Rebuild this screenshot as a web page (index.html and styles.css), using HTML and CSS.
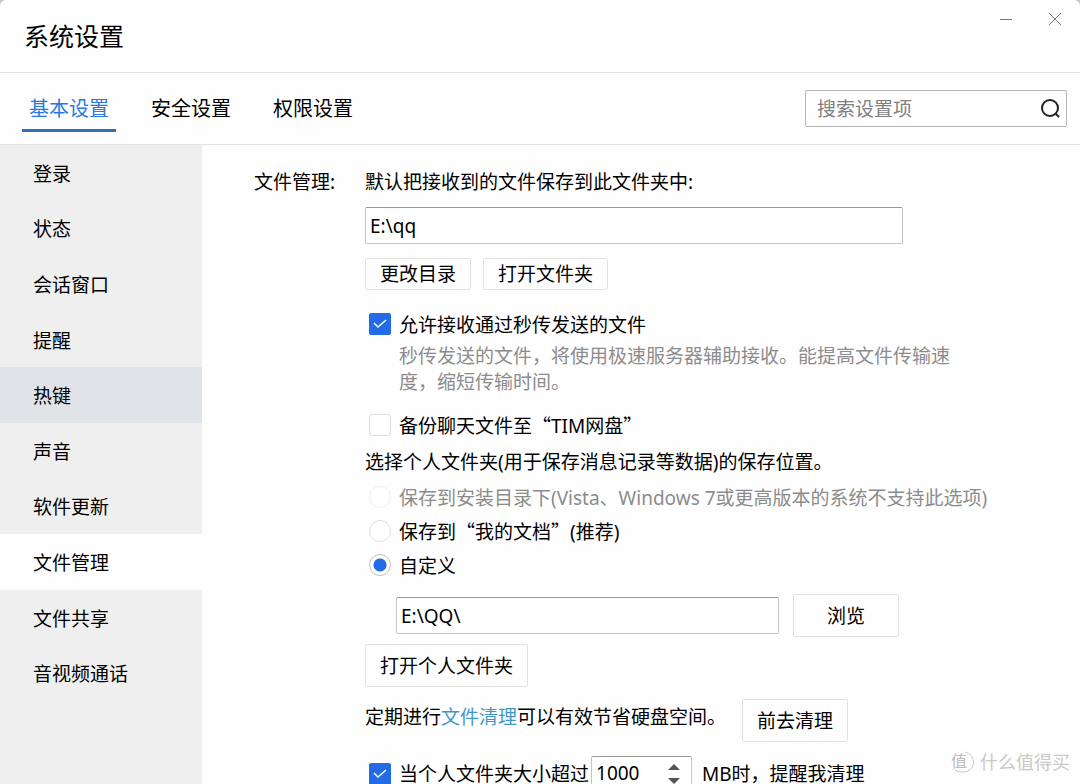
FILE: index.html
```
<!DOCTYPE html>
<html lang="zh-CN">
<head>
    <meta charset="UTF-8">
    <meta name="viewport" content="width=device-width, initial-scale=1.0">
    <title>系统设置</title>
    <link rel="stylesheet" href="styles.css">
</head>
<body>

<div class="window">
    <header class="titlebar">
        <h1>系统设置</h1>
        <div class="win-buttons">
            <button type="button" aria-label="最小化">
                <svg width="14" height="14" viewBox="0 0 14 14"><path d="M1 7.5h12"/></svg>
            </button>
            <button type="button" aria-label="关闭">
                <svg width="14" height="14" viewBox="0 0 14 14"><path d="M1 1l12 12M13 1L1 13"/></svg>
            </button>
        </div>
    </header>

    <div class="toolbar">
        <nav class="tabs">
            <a href="#" class="active">基本设置</a>
            <a href="#">安全设置</a>
            <a href="#">权限设置</a>
        </nav>
        <div class="search">
            <input type="text" placeholder="搜索设置项" aria-label="搜索设置项">
            <button type="button" aria-label="搜索">
                <svg width="20" height="20" viewBox="0 0 20 20"><circle cx="10" cy="9" r="8"/><path d="M15 14l4 4"/></svg>
            </button>
        </div>
    </div>

    <div class="main">
        <nav class="sidebar">
            <div class="menu">
                <a href="#">登录</a>
                <a href="#">状态</a>
                <a href="#">会话窗口</a>
                <a href="#">提醒</a>
                <a href="#" class="hover">热键</a>
                <a href="#">声音</a>
                <a href="#">软件更新</a>
                <a href="#" class="active">文件管理</a>
                <a href="#">文件共享</a>
                <a href="#">音视频通话</a>
            </div>
        </nav>

        <form class="content">
            <h2>文件管理:</h2>
            <div class="fields">
                <label class="line first" for="recv">默认把接收到的文件保存到此文件夹中:</label>
                <input class="box path" type="text" id="recv" value="E:\qq">
                <div class="buttons">
                    <button type="button" class="btn small">更改目录</button>
                    <button type="button" class="btn small">打开文件夹</button>
                </div>

                <label class="option fast"><input type="checkbox" checked>允许接收通过秒传发送的文件</label>
                <p class="hint">秒传发送的文件，将使用极速服务器辅助接收。能提高文件传输速度，缩短传输时间。</p>
                <label class="option backup"><input type="checkbox"><span>备份聊天文件至<span class="quote">“</span>TIM网盘<span class="quote">”</span></span></label>

                <p class="line place">选择个人文件夹(用于保存消息记录等数据)的保存位置。</p>
                <div class="radios">
                    <label class="option disabled"><input type="radio" name="place" disabled>保存到安装目录下(Vista、Windows 7或更高版本的系统不支持此选项)</label>
                    <label class="option"><input type="radio" name="place"><span>保存到<span class="quote">“</span>我的文档<span class="quote">”</span>(推荐)</span></label>
                    <label class="option"><input type="radio" name="place" checked>自定义</label>
                </div>
                <div class="custom">
                    <input class="box" type="text" value="E:\QQ\" aria-label="自定义目录">
                    <button type="button" class="btn">浏览</button>
                </div>
                <button type="button" class="btn">打开个人文件夹</button>

                <div class="clean">
                    <span>定期进行<a href="#">文件清理</a>可以有效节省硬盘空间。</span>
                    <button type="button" class="btn">前去清理</button>
                </div>
                <div class="limit">
                    <label class="option"><input type="checkbox" checked>当个人文件夹大小超过</label>
                    <div class="spin">
                        <input class="box" type="number" value="1000" aria-label="大小">
                        <svg width="12" height="22" viewBox="0 0 12 22"><path d="M0 7l6-6 6 6zM0 15l6 6 6-6z"/></svg>
                    </div>
                    <span>MB时，提醒我清理</span>
                </div>
            </div>
        </form>
    </div>

    <div class="watermark">
        <svg width="24" height="24" viewBox="0 0 24 24">
            <path d="M15 2A10 10 0 0 1 12 22Q8 22 5 20"/>
            <text x="1" y="17">值</text>
        </svg>
        <span>什么值得买</span>
    </div>
</div>

</body>
</html>
```
FILE: styles.css
```
* {
    box-sizing: border-box;
}
body {
    margin: 0;
    background-color: #c8c8c8;
    color: #000;
    font-family: "Noto Sans", "Noto Sans CJK SC", sans-serif;
    font-size: 19px;
}
h1, h2, p {
    margin: 0;
    font-weight: normal;
}
a {
    color: inherit;
    text-decoration: none;
}
button, input {
    font: inherit;
    color: inherit;
}
button {
    padding: 0;
    border: none;
    background: none;
    cursor: pointer;
}
.window {
    position: relative;
    display: flex;
    flex-direction: column;
    height: 100vh;
    overflow: hidden;
    background-color: #fefefe;
    border-radius: 6px 6px 0 0;
}

/* title bar */
.titlebar {
    display: flex;
    justify-content: space-between;
    flex: none;
    height: 73px;
    padding: 0 18px 0 24px;
    border-bottom: 1px solid #e4e4e4;
}
h1 {
    font-size: 25px;
    line-height: 72px;
}
.win-buttons {
    display: flex;
    gap: 35px;
    padding-top: 12px;
}
.win-buttons button {
    width: 14px;
    height: 14px;
}
svg {
    display: block;
    fill: none;
    stroke: #777;
}

/* tabs and search */
.toolbar {
    display: flex;
    justify-content: space-between;
    align-items: center;
    flex: none;
    height: 72px;
    padding: 0 13px 0 22px;
    border-bottom: 1px solid #e4e4e4;
}
.tabs {
    display: flex;
    gap: 28px;
    font-size: 20px;
}
.tabs a {
    height: 46px;
    padding: 0 7px;
    line-height: 46px;
    border-bottom: 3px solid transparent;
}
.tabs .active {
    color: #2b78e4;
    border-color: #2f6fb5;
}
.search {
    display: flex;
    align-items: center;
    width: 262px;
    height: 37px;
    padding: 0 6px 0 11px;
    border: 1px solid #b4b4b4;
    border-radius: 2px;
}
.search input {
    flex: 1;
    min-width: 0;
    padding: 0;
    border: none;
    outline: none;
    background: none;
}
.search input::placeholder {
    color: #808080;
}
.search svg {
    stroke: #222;
    stroke-width: 2;
}

/* sidebar */
.main {
    display: flex;
    flex: 1;
    min-height: 0;
}
.sidebar {
    flex: none;
    width: 202px;
    background-color: #efefef;
}
.menu {
    display: grid;
    grid-auto-rows: 1fr;
    height: 556px;
}
.menu a {
    display: flex;
    align-items: center;
    padding-left: 33px;
}
.menu .hover {
    background-color: #e0e4e9;
}
.menu .active {
    background-color: #fefefe;
}

/* content */
.content {
    display: flex;
    flex: 1;
    padding: 19px 0 0 52px;
}
h2 {
    width: 111px;
    font-size: 19px;
    line-height: 36px;
}
.fields {
    display: flex;
    flex-direction: column;
    align-items: flex-start;
    flex: 1;
}
.fields > * {
    flex: none;
}
.line {
    line-height: 30px;
}
.first {
    line-height: 36px;
}
.box {
    height: 37px;
    padding: 0 4px;
    border: 1px solid #c4c4c4;
    border-top-color: #999;
    border-radius: 2px;
    background-color: #fff;
    outline: none;
}
.path {
    width: 538px;
    margin-top: 7px;
}
.buttons {
    display: flex;
    gap: 12px;
    margin-top: 14px;
}
.btn {
    min-width: 106px;
    height: 43px;
    padding: 0 14px;
    border: 1px solid #e2e2e2;
    border-radius: 2px;
    line-height: 30px;
    white-space: nowrap;
}
.small {
    height: 32px;
}
.option {
    display: flex;
    align-items: center;
    gap: 8px;
    height: 30px;
    padding-left: 4px;
    white-space: nowrap;
}
.option input {
    appearance: none;
    flex: none;
    width: 22px;
    height: 22px;
    margin: 0;
    border: 1px solid #dedede;
    border-radius: 2px;
    background-color: #fff;
}
.option input[type="checkbox"]:checked {
    border-color: #246be8;
    background: #246be8 url("data:image/svg+xml,%3Csvg xmlns='http://www.w3.org/2000/svg' viewBox='0 0 20 20'%3E%3Cpath d='M4 9l4 4 8-7' fill='none' stroke='%23fff' stroke-width='1.5'/%3E%3C/svg%3E");
}
.option input[type="radio"] {
    border-radius: 50%;
}
.option input[type="radio"]:checked {
    border-color: #c0c0c0;
    background: radial-gradient(circle, #246be8 6px, #fff 7px);
}
.disabled {
    color: #8c8c8c;
}
.option input:disabled {
    border-color: #f0f0f0;
}
.quote {
    font-family: "Noto Sans CJK SC", sans-serif;
}
.fast {
    margin-top: 19px;
}
.hint {
    width: 556px;
    margin: 4px 0 0 34px;
    color: #8c8c8c;
    line-height: 26px;
}
.backup {
    margin-top: 15px;
}
.place {
    margin-top: 7px;
}
.radios {
    margin-top: 3px;
}
.radios .option {
    height: 34px;
}
.custom {
    display: flex;
    align-items: center;
    gap: 14px;
    margin: 12px 0 7px 31px;
}
.custom .box {
    width: 383px;
}
.clean {
    display: flex;
    align-items: flex-start;
    gap: 16px;
    margin-top: 12px;
    line-height: 36px;
}
.clean a {
    color: #3f97c9;
}
.limit {
    display: flex;
    align-items: flex-start;
    gap: 2px;
    margin-top: 14px;
    line-height: 36px;
}
.limit .option {
    height: 36px;
}
.limit > span {
    padding-left: 8px;
}
.spin {
    position: relative;
}
.spin .box {
    display: block;
    width: 101px;
    height: 34px;
    appearance: textfield;
}
.spin .box::-webkit-inner-spin-button {
    appearance: none;
}
.spin svg {
    position: absolute;
    top: 7px;
    right: 12px;
    fill: #555;
    stroke: none;
}

.watermark {
    position: absolute;
    right: 10px;
    bottom: 8px;
    display: flex;
    align-items: center;
    gap: 6px;
    color: #c9c9c9;
    font-size: 18px;
    line-height: 28px;
}
.watermark svg {
    stroke: #c9c9c9;
}
.watermark text {
    fill: #bbb;
    stroke: none;
    font-size: 16px;
}
```
